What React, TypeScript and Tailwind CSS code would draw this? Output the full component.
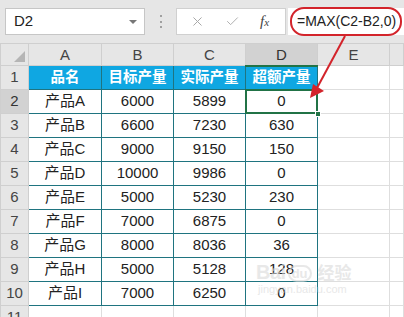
import { X, Check } from 'lucide-react';

type Row = [string, number, number, number];

const rows: Row[] = [
  ['产品A', 6000, 5899, 0],
  ['产品B', 6600, 7230, 630],
  ['产品C', 9000, 9150, 150],
  ['产品D', 10000, 9986, 0],
  ['产品E', 5000, 5230, 230],
  ['产品F', 7000, 6875, 0],
  ['产品G', 8000, 8036, 36],
  ['产品H', 5000, 5128, 128],
  ['产品I', 7000, 6250, 0],
];

const headers = ['品名', '目标产量', '实际产量', '超额产量'];
const letters = ['A', 'B', 'C', 'D', 'E', ''];

const font = "font-['Liberation_Sans','Noto_Sans_CJK_SC',sans-serif]";

export default function App() {
  return (
    <div className={`relative h-[317px] w-[404px] overflow-hidden bg-white ${font}`}>
      {/* 公式栏 */}
      <div className="flex h-[43px] items-start bg-[#e6e6e6] pt-[8px]">
        <div className="ml-[5px] flex h-[27px] w-[140px] items-center justify-between border border-[#c6c6c6] bg-white pl-[8px] pr-[7px] text-[15px] text-[#222]">
          <span>D2</span>
          <span className="h-0 w-0 border-x-[4px] border-t-[4px] border-x-transparent border-t-[#777]" />
        </div>
        <div className="ml-[15px] mt-[7px] flex h-[13px] flex-col justify-between">
          <span className="h-[2px] w-[2px] bg-[#a0a0a0]" />
          <span className="h-[2px] w-[2px] bg-[#a0a0a0]" />
          <span className="h-[2px] w-[2px] bg-[#a0a0a0]" />
        </div>
        <div className="ml-[14px] flex h-[27px] w-[110px] items-center border border-[#d0d0d0] bg-white pl-[13px]">
          <X className="h-[15px] w-[15px] text-[#a8a8a8]" strokeWidth={1.6} />
          <Check className="ml-[20px] h-[15px] w-[15px] text-[#b0b0b0]" strokeWidth={1.6} />
          <span className="ml-[20px] font-['Liberation_Serif',serif] text-[15px] italic text-[#444]">
            f<span className="text-[11px]">x</span>
          </span>
        </div>
        <div className="ml-[2px] flex h-[27px] flex-1 items-center overflow-hidden whitespace-nowrap bg-white pl-[9px] text-[14px] text-[#222]">
          =MAX(C2-B2,0)
        </div>
      </div>

      {/* 工作表 */}
      <table className="w-full table-fixed border-collapse">
        <colgroup>
          <col className="w-[28px]" />
          <col className="w-[73px]" />
          <col className="w-[72px]" />
          <col className="w-[72px]" />
          <col className="w-[72px]" />
          <col className="w-[72px]" />
          <col />
        </colgroup>
        <tbody>
          <tr className="h-[22px]">
            <td className="relative border border-[#cfcfcf] bg-[#e6e6e6] p-0">
              <svg className="absolute bottom-[3px] right-[3px]" width="11" height="11">
                <polygon points="11,0 11,11 0,11" fill="#b5b5b5" />
              </svg>
            </td>
            {letters.map((l, i) => (
              <td
                key={i}
                className={`border border-[#cfcfcf] p-0 text-center text-[15px] leading-none ${
                  l === 'D' ? 'border-b-2 border-b-[#217346] bg-[#d2d2d2] text-[#333]' : 'bg-[#e6e6e6] text-[#444]'
                }`}
              >
                {l}
              </td>
            ))}
          </tr>

          <tr className="h-[24px]">
            <td className="border border-[#cfcfcf] bg-[#e6e6e6] p-0 text-center text-[15px] text-[#444]">1</td>
            {headers.map((h) => (
              <td
                key={h}
                className="border border-[#1f7480] bg-[#0fa7e2] p-0 text-center text-[14.5px] font-bold text-white"
              >
                {h}
              </td>
            ))}
            <td className="border border-[#dedede] p-0" />
            <td className="border border-[#dedede] p-0" />
          </tr>

          {rows.map((r, i) => {
            const n = i + 2;
            const sel = n === 2;
            return (
              <tr key={n} className="h-[24px]">
                <td
                  className={`border border-[#cfcfcf] p-0 text-center text-[15px] ${
                    sel ? 'bg-[#d2d2d2] text-[#333]' : 'bg-[#e6e6e6] text-[#444]'
                  }`}
                >
                  {n}
                </td>
                {r.map((v, j) => (
                  <td
                    key={j}
                    className={`border border-[#1f7480] p-0 text-center text-[15px] text-[#222] ${
                      sel && j === 3 ? 'relative' : ''
                    }`}
                  >
                    {v}
                    {sel && j === 3 && (
                      <>
                        <span className="pointer-events-none absolute inset-[-1px] border-2 border-[#217346]" />
                        <span className="absolute bottom-[-4px] right-[-4px] h-[6px] w-[6px] border border-white bg-[#217346]" />
                      </>
                    )}
                  </td>
                ))}
                <td className="border border-[#dedede] p-0" />
                <td className="border border-[#dedede] p-0" />
              </tr>
            );
          })}

          <tr className="h-[24px]">
            <td className="border border-[#cfcfcf] bg-[#e6e6e6] p-0 text-center text-[15px] text-[#444]">11</td>
            {[0, 1, 2, 3, 4, 5].map((k) => (
              <td key={k} className="border border-[#dedede] p-0" />
            ))}
          </tr>
        </tbody>
      </table>

      {/* 红色标注 */}
      <svg className="pointer-events-none absolute left-0 top-0" width="404" height="317">
        <rect x="291" y="8" width="110" height="27" rx="13" fill="none" stroke="#d3242b" strokeWidth="2" />
        <line x1="345" y1="36" x2="317" y2="88" stroke="#d3242b" strokeWidth="2" />
        <polygon points="310,98 313,84 324,91" fill="#d3242b" />
      </svg>

      {/* 水印 */}
      <div className="pointer-events-none absolute left-[256px] top-[262px] flex flex-col items-start text-[#d9d9d9] opacity-60">
        <div className="flex items-end">
          <span className="text-[20px] font-bold leading-none tracking-tight">Bai</span>
          <span className="relative ml-[2px] rounded-full border-2 border-[#d9d9d9] px-[2px] text-[13px] font-bold leading-none">
            du
          </span>
          <span className="ml-[6px] text-[17px] font-bold leading-none">经验</span>
        </div>
        <span className="ml-[2px] mt-[2px] text-[11px] leading-none">jingyan.baidu.com</span>
      </div>
    </div>
  );
}
